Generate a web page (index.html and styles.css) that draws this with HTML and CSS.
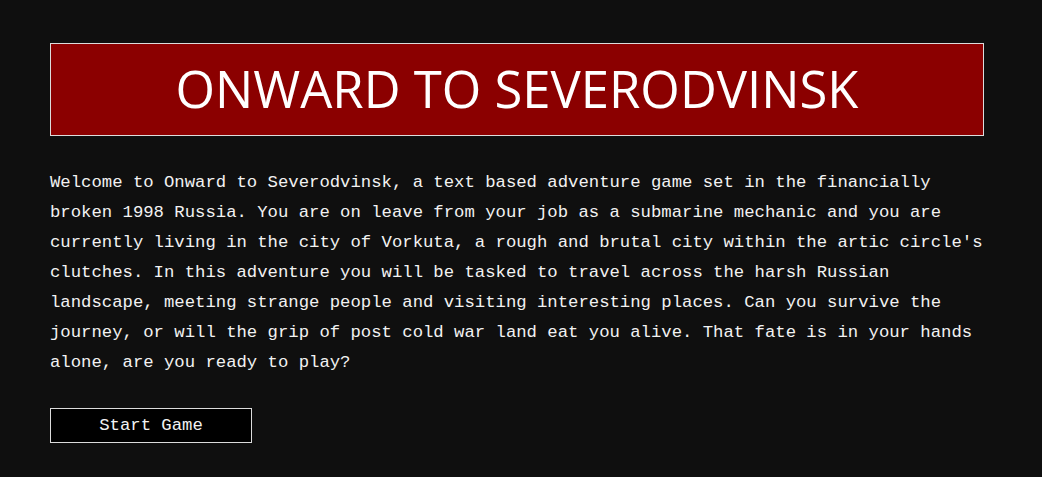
FILE: index.html
```html
<!DOCTYPE html>
<html lang="en">
<head>
<meta charset="utf-8">
<title>Onward to Severodvinsk</title>
<link rel="stylesheet" href="styles.css">
</head>
<body>
<main class="page">
  <header class="banner">
    <h1 class="title">ONWARD TO SEVERODVINSK</h1>
  </header>
  <p class="intro">Welcome to Onward to Severodvinsk, a text based adventure game set in the financially broken 1998 Russia. You are on leave from your job as a submarine mechanic and you are currently living in the city of Vorkuta, a rough and brutal city within the artic circle's clutches. In this adventure you will be tasked to travel across the harsh Russian landscape, meeting strange people and visiting interesting places. Can you survive the journey, or will the grip of post cold war land eat you alive. That fate is in your hands alone, are you ready to play?</p>
  <button class="start" type="button">Start Game</button>
</main>
</body>
</html>
```
FILE: styles.css
```css
html, body {
  margin: 0;
  padding: 0;
  background: #0f0f0f;
}
.page {
  width: 934px;
  padding: 43px 0 0 50px;
  display: flex;
  flex-direction: column;
  align-items: flex-start;
}
.banner {
  box-sizing: border-box;
  width: 934px;
  height: 93px;
  background: #8b0000;
  border: 1px solid #dcdcdc;
  display: flex;
  align-items: center;
  justify-content: center;
}
.title {
  margin: 0;
  font-family: "Open Sans", sans-serif;
  font-weight: 400;
  font-size: 50.8px;
  color: #ffffff;
  line-height: 1;
}
.intro {
  margin: 32px 0 0 0;
  font-family: "Liberation Mono", monospace;
  font-size: 17.28px;
  line-height: 30px;
  color: #f2f2f2;
}
.start {
  margin-top: 30px;
  box-sizing: border-box;
  width: 202px;
  height: 35px;
  background: #000000;
  border: 1px solid #dcdcdc;
  color: #f2f2f2;
  font-family: "Liberation Mono", monospace;
  font-size: 17.28px;
  padding: 0;
}
```
